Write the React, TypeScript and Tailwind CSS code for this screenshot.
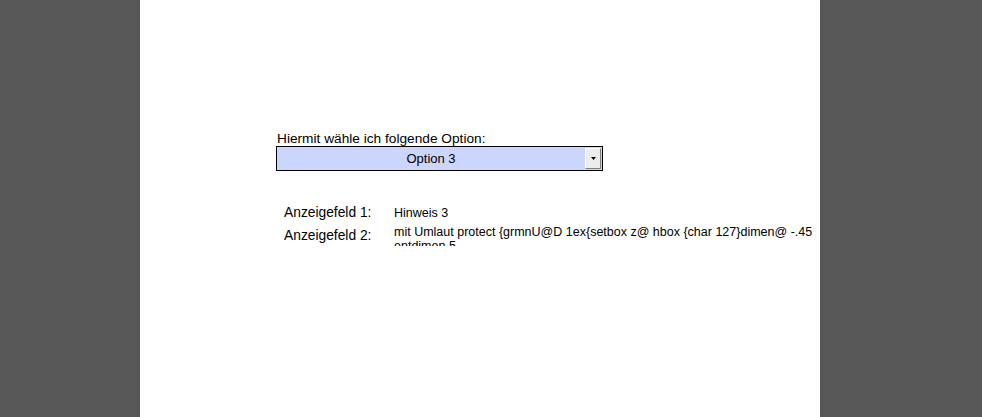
export default function App() {
  return (
    <div className="h-[417px] w-full bg-[#575757] flex overflow-hidden font-['Liberation_Sans',Arial,sans-serif] text-black">
      <div className="w-[140px] shrink-0" />
      <div className="w-[680px] shrink-0 h-full bg-white pt-[131px] pl-[136px]">
        {/* Auswahl */}
        <div className="text-[13.7px] leading-[16px] pl-[1px]">Hiermit wähle ich folgende Option:</div>
        <div className="-mt-[1px] w-[327px] h-[25px] border border-black bg-[#ccd5fb] flex items-center">
          <div className="flex-1 text-center text-[13px] leading-[16px] pt-[1px]">Option 3</div>
          <div className="w-[16px] h-[21px] mr-[1px] bg-[#ececec] border-t border-l border-white border-r border-b border-r-[#808080] border-b-[#808080] flex items-center justify-center">
            <svg width="5" height="3" viewBox="0 0 5 3">
              <path d="M0 0H5L2.5 3Z" fill="#000" />
            </svg>
          </div>
        </div>

        {/* Anzeigefelder */}
        <div className="mt-[34px] pl-[8px] flex flex-col">
          <div className="flex leading-[16px]">
            <div className="w-[110px] text-[13.8px]">Anzeigefeld 1:</div>
            <div className="text-[12.5px]">Hinweis 3</div>
          </div>
          <div className="flex mt-[4px]">
            <div className="w-[110px] pt-[3px] text-[13.8px] leading-[16px]">Anzeigefeld 2:</div>
            <div className="w-[424px] h-[21px] overflow-hidden text-[12.5px] leading-[14px]">
              mit Umlaut protect {"{"}grmnU@D 1ex{"{"}setbox z@ hbox {"{"}char 127{"}"}dimen@ -.45 entdimen 5
            </div>
          </div>
        </div>
      </div>
      <div className="flex-1" />
    </div>
  );
}
